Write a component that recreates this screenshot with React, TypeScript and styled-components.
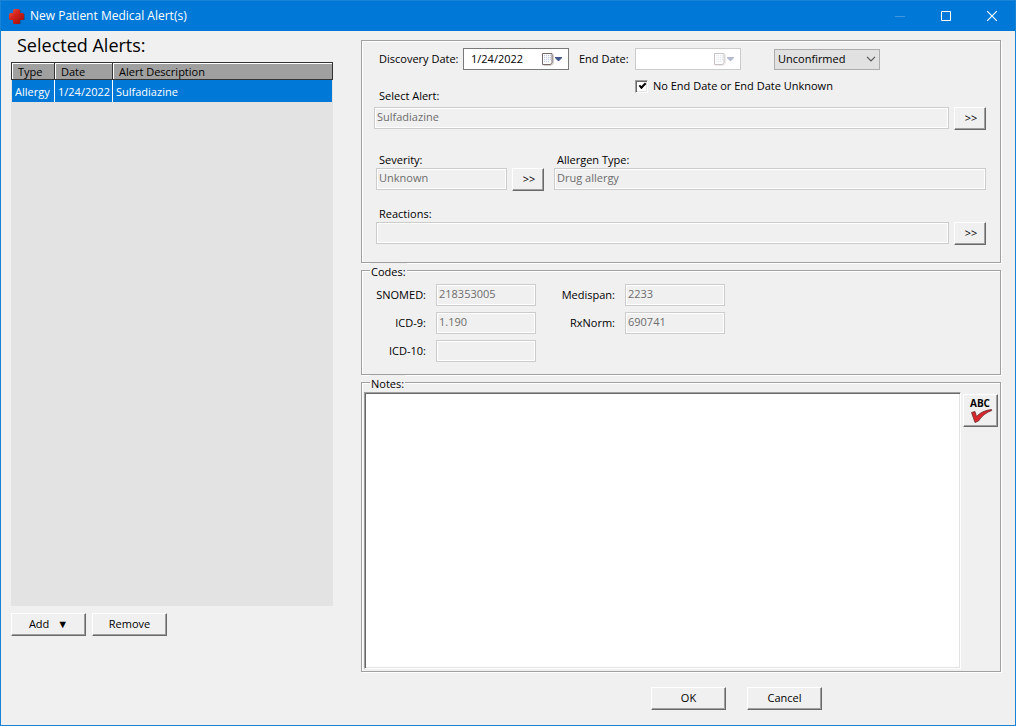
import React from "react";
import styled, { createGlobalStyle, css } from "styled-components";

const GlobalStyle = createGlobalStyle`
  *, *::before, *::after { box-sizing: border-box; }
  body {
    margin: 0;
    background: #f0f0f0;
    color: #000;
    font-family: "Open Sans", "Noto Sans", sans-serif;
    font-size: 11px;
    line-height: 16px;
  }
  button, input, select, textarea { font: inherit; color: inherit; margin: 0; }
`;

const Window = styled.div`
  display: flex;
  flex-direction: column;
  min-height: 100vh;
  border: 1px solid #1883d7;
  background: #f0f0f0;
`;

const TitleBar = styled.header`
  display: flex;
  align-items: center;
  height: 30px;
  padding-left: 7px;
  background: #0078d7;
  color: #fff;
`;

const Title = styled.h1`
  flex: 1;
  margin: 0 0 0 5px;
  font-size: 12px;
  font-weight: 400;
`;

const CaptionButton = styled.button`
  display: flex;
  align-items: center;
  justify-content: center;
  width: 46px;
  height: 30px;
  padding: 0;
  border: 0;
  background: transparent;
`;

const Body = styled.main`
  flex: 1;
  display: grid;
  grid-template-columns: 322px minmax(0, 1fr);
  column-gap: 28px;
  padding: 0 14px 0 10px;
`;

const Column = styled.div`
  display: flex;
  flex-direction: column;
  min-width: 0;
`;

const AlertsColumn = styled(Column)`
  padding-bottom: 89px;
`;

const DetailsColumn = styled(Column)`
  padding: 9px 0 15px;
`;

const Heading = styled.h2`
  margin: 0;
  padding: 2px 0 5px 6px;
  font-size: 18px;
  font-weight: 400;
  line-height: 24px;
`;

const AlertList = styled.div`
  flex: 1;
  min-height: 200px;
  background: #e3e3e3;
`;

const AlertTable = styled.table`
  width: 100%;
  border-collapse: separate;
  border-spacing: 0;
  table-layout: fixed;
  white-space: nowrap;
`;

const HeadCell = styled.th<{ $width?: number }>`
  width: ${(p) => (p.$width ? `${p.$width}px` : "auto")};
  height: 18px;
  padding: 1px 0 0 6px;
  border: solid #333;
  border-width: 1px 1px 1px 0;
  background: #a0a0a0;
  box-shadow: inset 1px 1px 0 #fff;
  font-weight: 400;
  line-height: 15px;
  text-align: left;

  &:first-child { border-left-width: 1px; }
`;

const Cell = styled.td`
  height: 22px;
  padding: 2px 0 0 3px;
  border-right: 1px solid #fff;
  background: #0078d7;
  color: #fff;

  &:first-child { border-left: 1px solid #e3e3e3; }
  &:last-child { border-right-color: #e3e3e3; }
`;

const ButtonRow = styled.div<{ $gap: number }>`
  display: flex;
  gap: ${(p) => p.$gap}px;
`;

const ListActions = styled(ButtonRow)`
  padding-top: 7px;
`;

const DialogActions = styled(ButtonRow)`
  justify-content: center;
  padding: 15px 0 0 111px;
`;

const raised = css`
  border: 1px solid;
  border-color: #fff #696969 #696969 #fff;
  box-shadow: inset -1px -1px 0 #a0a0a0;
  background: #f0f0f0;
`;

const PushButton = styled.button`
  ${raised}
  width: 75px;
  height: 23px;
  padding: 0 0 2px;
`;

const Arrow = styled.span`
  margin-left: 5px;
`;

const BrowseButton = styled(PushButton)`
  flex: none;
  width: 32px;
  margin-left: 5px;
  padding-left: 2px;
`;

const SpellButton = styled.button`
  ${raised}
  flex: none;
  width: 35px;
  height: 33px;
  margin: 2px 0 0 2px;
  padding: 0;
`;

const etched = css`
  margin: 0;
  min-width: 0;
  border: 1px solid #a0a0a0;
  box-shadow: 1px 1px 0 #fff, inset 1px 1px 0 #fff;
`;

const DetailsPanel = styled.section`
  ${etched}
  padding: 7px 14px 17px 12px;
`;

const Group = styled.fieldset`
  ${etched}
  padding: 3px 2px 2px;
`;

const Legend = styled.legend`
  height: 14px;
  margin-left: 6px;
  padding: 3px 1px 0;
  background: #f0f0f0;
  line-height: 12px;
`;

const NotesGroup = styled(Group)`
  flex: 1;
  display: flex;
`;

const DateGrid = styled.div`
  display: grid;
  grid-template-columns: 84px 116px 56px 139px 106px;
  grid-template-rows: 22px auto;
  align-items: center;
  padding-left: 5px;
`;

const FieldLabel = styled.label`
  display: block;
`;

const AlertLabel = styled(FieldLabel)`
  grid-column: 1 / span 2;
  padding: 18px 0 3px;
`;

const DateField = styled.div<{ $disabled?: boolean }>`
  display: flex;
  align-items: center;
  width: 106px;
  height: 22px;
  padding: 0 5px 0 7px;
  border: 1px solid ${(p) => (p.$disabled ? "#ccc" : "#7a7a7a")};
  background: #fff;
`;

const DateInput = styled.input`
  flex: 1;
  min-width: 0;
  padding: 0;
  border: 0;
  background: transparent;
  outline: 0;
`;

const PickerButton = styled.button`
  display: flex;
  padding: 0;
  border: 0;
  background: transparent;

  &:disabled { opacity: 0.4; }
`;

const SelectWrap = styled.div`
  display: grid;
  align-items: center;
  height: 22px;

  & > * { grid-area: 1 / 1; }
  & > svg { justify-self: end; margin-right: 4px; pointer-events: none; }
`;

const StatusSelect = styled.select`
  appearance: none;
  width: 106px;
  height: 21px;
  padding: 0 0 0 3px;
  border: 1px solid #adadad;
  border-radius: 0;
  background: #e1e1e1;
`;

const CheckLabel = styled.label`
  grid-column: 4 / -1;
  align-self: start;
  display: flex;
  align-items: center;
  gap: 5px;
  padding-top: 8px;
  white-space: nowrap;
`;

const CheckBox = styled.input`
  appearance: none;
  display: grid;
  place-items: center;
  width: 13px;
  height: 13px;
  border: 1px solid;
  border-color: #a0a0a0 #fff #fff #a0a0a0;
  background: #fff;
  box-shadow: inset 1px 1px 0 #696969, inset -1px -1px 0 #e3e3e3;

  &:checked::before {
    content: "";
    width: 7px;
    height: 4px;
    margin: -2px 0 0 1px;
    border: solid #000;
    border-width: 0 0 2px 2px;
    transform: rotate(-45deg);
  }
`;

const FieldRow = styled.div`
  display: flex;
`;

const ReadField = styled.input`
  flex: 1;
  min-width: 0;
  width: 100%;
  height: 22px;
  padding: 0 2px 4px;
  border: 1px solid #ccc;
  background: #f0f0f0;
  box-shadow: inset 0 0 0 1px #fff;
  color: #6d6d6d;
`;

const SplitRow = styled.div`
  display: grid;
  grid-template-columns: 168px minmax(0, 1fr);
  column-gap: 10px;
  padding: 22px 0 0 2px;
`;

const Stack = styled.div<{ $top?: number; $left?: number }>`
  padding: ${(p) => p.$top ?? 0}px 0 0 ${(p) => p.$left ?? 0}px;

  & > label { padding-left: 3px; }
`;

const CodesGrid = styled.div`
  display: grid;
  grid-template-columns: 52px 100px 69px 100px;
  column-gap: 10px;
  row-gap: 6px;
  align-items: center;
  padding: 4px 10px 10px;
`;

const CodeLabel = styled.label`
  text-align: right;
`;

const NotesBox = styled.textarea`
  flex: 1;
  min-width: 0;
  min-height: 120px;
  padding: 4px;
  border: 1px solid;
  border-color: #a0a0a0 #fff #fff #a0a0a0;
  border-radius: 0;
  box-shadow: inset 1px 1px 0 #696969, inset -1px -1px 0 #e3e3e3;
  background: #fff;
  resize: none;
  outline: 0;
`;

const CrossIcon = () => (
  <svg width="17" height="17" viewBox="0 0 17 17" aria-hidden="true">
    <defs>
      <linearGradient id="cross" x1="0" y1="0" x2="1" y2="1">
        <stop offset="0" stopColor="#ee5a50" />
        <stop offset="0.4" stopColor="#d3231b" />
        <stop offset="1" stopColor="#9c0d08" />
      </linearGradient>
    </defs>
    <path d="M7 2h6v4h4v6h-4v4H7v-4H3V6h4z" fill="#20446e" opacity="0.5" />
    <path
      d="M6.500 1h4q1.500 0 1.500 1.500V5h2.500Q16 5 16 6.500v4q0 1.500-1.500 1.500H12v2.500q0 1.500-1.500 1.500h-4Q5 16 5 14.500V12H2.500Q1 12 1 10.500v-4Q1 5 2.500 5H5V2.500Q5 1 6.500 1z"
      fill="url(#cross)"
    />
  </svg>
);

const CalendarIcon = () => (
  <svg width="22" height="14" viewBox="0 0 22 14" aria-hidden="true">
    <path d="M2.500 13h8l1.500-1.500v-9" fill="none" stroke="#8a7c74" opacity="0.7" />
    <path d="M1.500 1.500h9.500v9l-1.500 2h-8z" fill="#fff" stroke="#77696a" />
    <path
      d="M3 3h1v1H3zM5 3h1v1H5zM7 3h1v1H7zM9 3h1v1H9zM3 5h1v1H3zM5 5h1v1H5zM7 5h1v1H7zM9 5h1v1H9zM3 7h1v1H3zM5 7h1v1H5zM7 7h1v1H7zM9 7h1v1H9zM3 9h1v1H3zM5 9h1v1H5zM7 9h1v1H7z"
      fill="#8fa0bf"
      stroke="#dbe1ec"
      strokeWidth="0.500"
    />
    <path d="M14 5h7v1l-3 3h-1l-3-3z" fill="#44598c" />
  </svg>
);

const ChevronIcon = () => (
  <svg width="10" height="6" viewBox="0 0 10 6" aria-hidden="true">
    <path d="M1 .8l4 4 4-4" fill="none" stroke="#555" strokeWidth="1.200" />
  </svg>
);

const SpellIcon = () => (
  <svg width="32" height="29" viewBox="0 0 32 29" aria-hidden="true">
    <text x="5" y="12" fontSize="10" fontWeight="700" fontFamily="Open Sans, sans-serif">ABC</text>
    <path
      d="M6.500 17.500l3.500-1 1.500 5q5.500-6 15-7l.3 1q-8.500 3-13.300 10.500l-3.500 1.500z"
      fill="#d9262b"
      stroke="#6b3030"
      strokeWidth="0.800"
    />
  </svg>
);

type CodeFieldProps = { id: string; label: string; value: string };

const CodeField = ({ id, label, value }: CodeFieldProps) => (
  <>
    <CodeLabel htmlFor={id}>{label}</CodeLabel>
    <ReadField id={id} value={value} disabled readOnly />
  </>
);

export default function App() {
  return (
    <>
      <GlobalStyle />
      <Window>
        <TitleBar>
          <CrossIcon />
          <Title>New Patient Medical Alert(s)</Title>
          <CaptionButton aria-label="Minimize" disabled>
            <svg width="10" height="10"><path d="M0 5.500h10" stroke="#3d98e2" /></svg>
          </CaptionButton>
          <CaptionButton aria-label="Maximize">
            <svg width="10" height="10"><path d="M.5.5h9v9h-9z" fill="none" stroke="#fff" /></svg>
          </CaptionButton>
          <CaptionButton aria-label="Close">
            <svg width="10" height="10"><path d="M0 0l10 10M10 0L0 10" stroke="#fff" strokeWidth="1.200" /></svg>
          </CaptionButton>
        </TitleBar>
        <Body>
          <AlertsColumn>
            <Heading>Selected Alerts:</Heading>
            <AlertList>
              <AlertTable>
                <thead>
                  <tr>
                    <HeadCell $width={44}>Type</HeadCell>
                    <HeadCell $width={58}>Date</HeadCell>
                    <HeadCell>Alert Description</HeadCell>
                  </tr>
                </thead>
                <tbody>
                  <tr>
                    <Cell>Allergy</Cell>
                    <Cell>1/24/2022</Cell>
                    <Cell>Sulfadiazine</Cell>
                  </tr>
                </tbody>
              </AlertTable>
            </AlertList>
            <ListActions $gap={6}>
              <PushButton>Add <Arrow>▼</Arrow></PushButton>
              <PushButton>Remove</PushButton>
            </ListActions>
          </AlertsColumn>

          <DetailsColumn>
            <DetailsPanel>
              <DateGrid>
                <FieldLabel htmlFor="discovery">Discovery Date:</FieldLabel>
                <DateField>
                  <DateInput id="discovery" defaultValue="1/24/2022" />
                  <PickerButton aria-label="Pick discovery date"><CalendarIcon /></PickerButton>
                </DateField>
                <FieldLabel htmlFor="end">End Date:</FieldLabel>
                <DateField $disabled>
                  <DateInput id="end" disabled />
                  <PickerButton aria-label="Pick end date" disabled><CalendarIcon /></PickerButton>
                </DateField>
                <SelectWrap>
                  <StatusSelect aria-label="Status" defaultValue="Unconfirmed">
                    <option>Unconfirmed</option>
                    <option>Confirmed</option>
                  </StatusSelect>
                  <ChevronIcon />
                </SelectWrap>
                <AlertLabel htmlFor="alert">Select Alert:</AlertLabel>
                <CheckLabel>
                  <CheckBox type="checkbox" defaultChecked />
                  No End Date or End Date Unknown
                </CheckLabel>
              </DateGrid>
              <FieldRow>
                <ReadField id="alert" value="Sulfadiazine" disabled readOnly />
                <BrowseButton aria-label="Choose alert">&gt;&gt;</BrowseButton>
              </FieldRow>
              <SplitRow>
                <Stack>
                  <FieldLabel htmlFor="severity">Severity:</FieldLabel>
                  <FieldRow>
                    <ReadField id="severity" value="Unknown" disabled readOnly />
                    <BrowseButton aria-label="Choose severity">&gt;&gt;</BrowseButton>
                  </FieldRow>
                </Stack>
                <Stack>
                  <FieldLabel htmlFor="allergen">Allergen Type:</FieldLabel>
                  <ReadField id="allergen" value="Drug allergy" disabled readOnly />
                </Stack>
              </SplitRow>
              <Stack $top={15} $left={2}>
                <FieldLabel htmlFor="reactions">Reactions:</FieldLabel>
                <FieldRow>
                  <ReadField id="reactions" value="" disabled readOnly />
                  <BrowseButton aria-label="Choose reactions">&gt;&gt;</BrowseButton>
                </FieldRow>
              </Stack>
            </DetailsPanel>

            <Group>
              <Legend>Codes:</Legend>
              <CodesGrid>
                <CodeField id="snomed" label="SNOMED:" value="218353005" />
                <CodeField id="medispan" label="Medispan:" value="2233" />
                <CodeField id="icd9" label="ICD-9:" value="1.190" />
                <CodeField id="rxnorm" label="RxNorm:" value="690741" />
                <CodeField id="icd10" label="ICD-10:" value="" />
              </CodesGrid>
            </Group>

            <NotesGroup>
              <Legend>Notes:</Legend>
              <NotesBox aria-label="Notes" />
              <SpellButton aria-label="Check spelling"><SpellIcon /></SpellButton>
            </NotesGroup>

            <DialogActions $gap={21}>
              <PushButton>OK</PushButton>
              <PushButton>Cancel</PushButton>
            </DialogActions>
          </DetailsColumn>
        </Body>
      </Window>
    </>
  );
}
